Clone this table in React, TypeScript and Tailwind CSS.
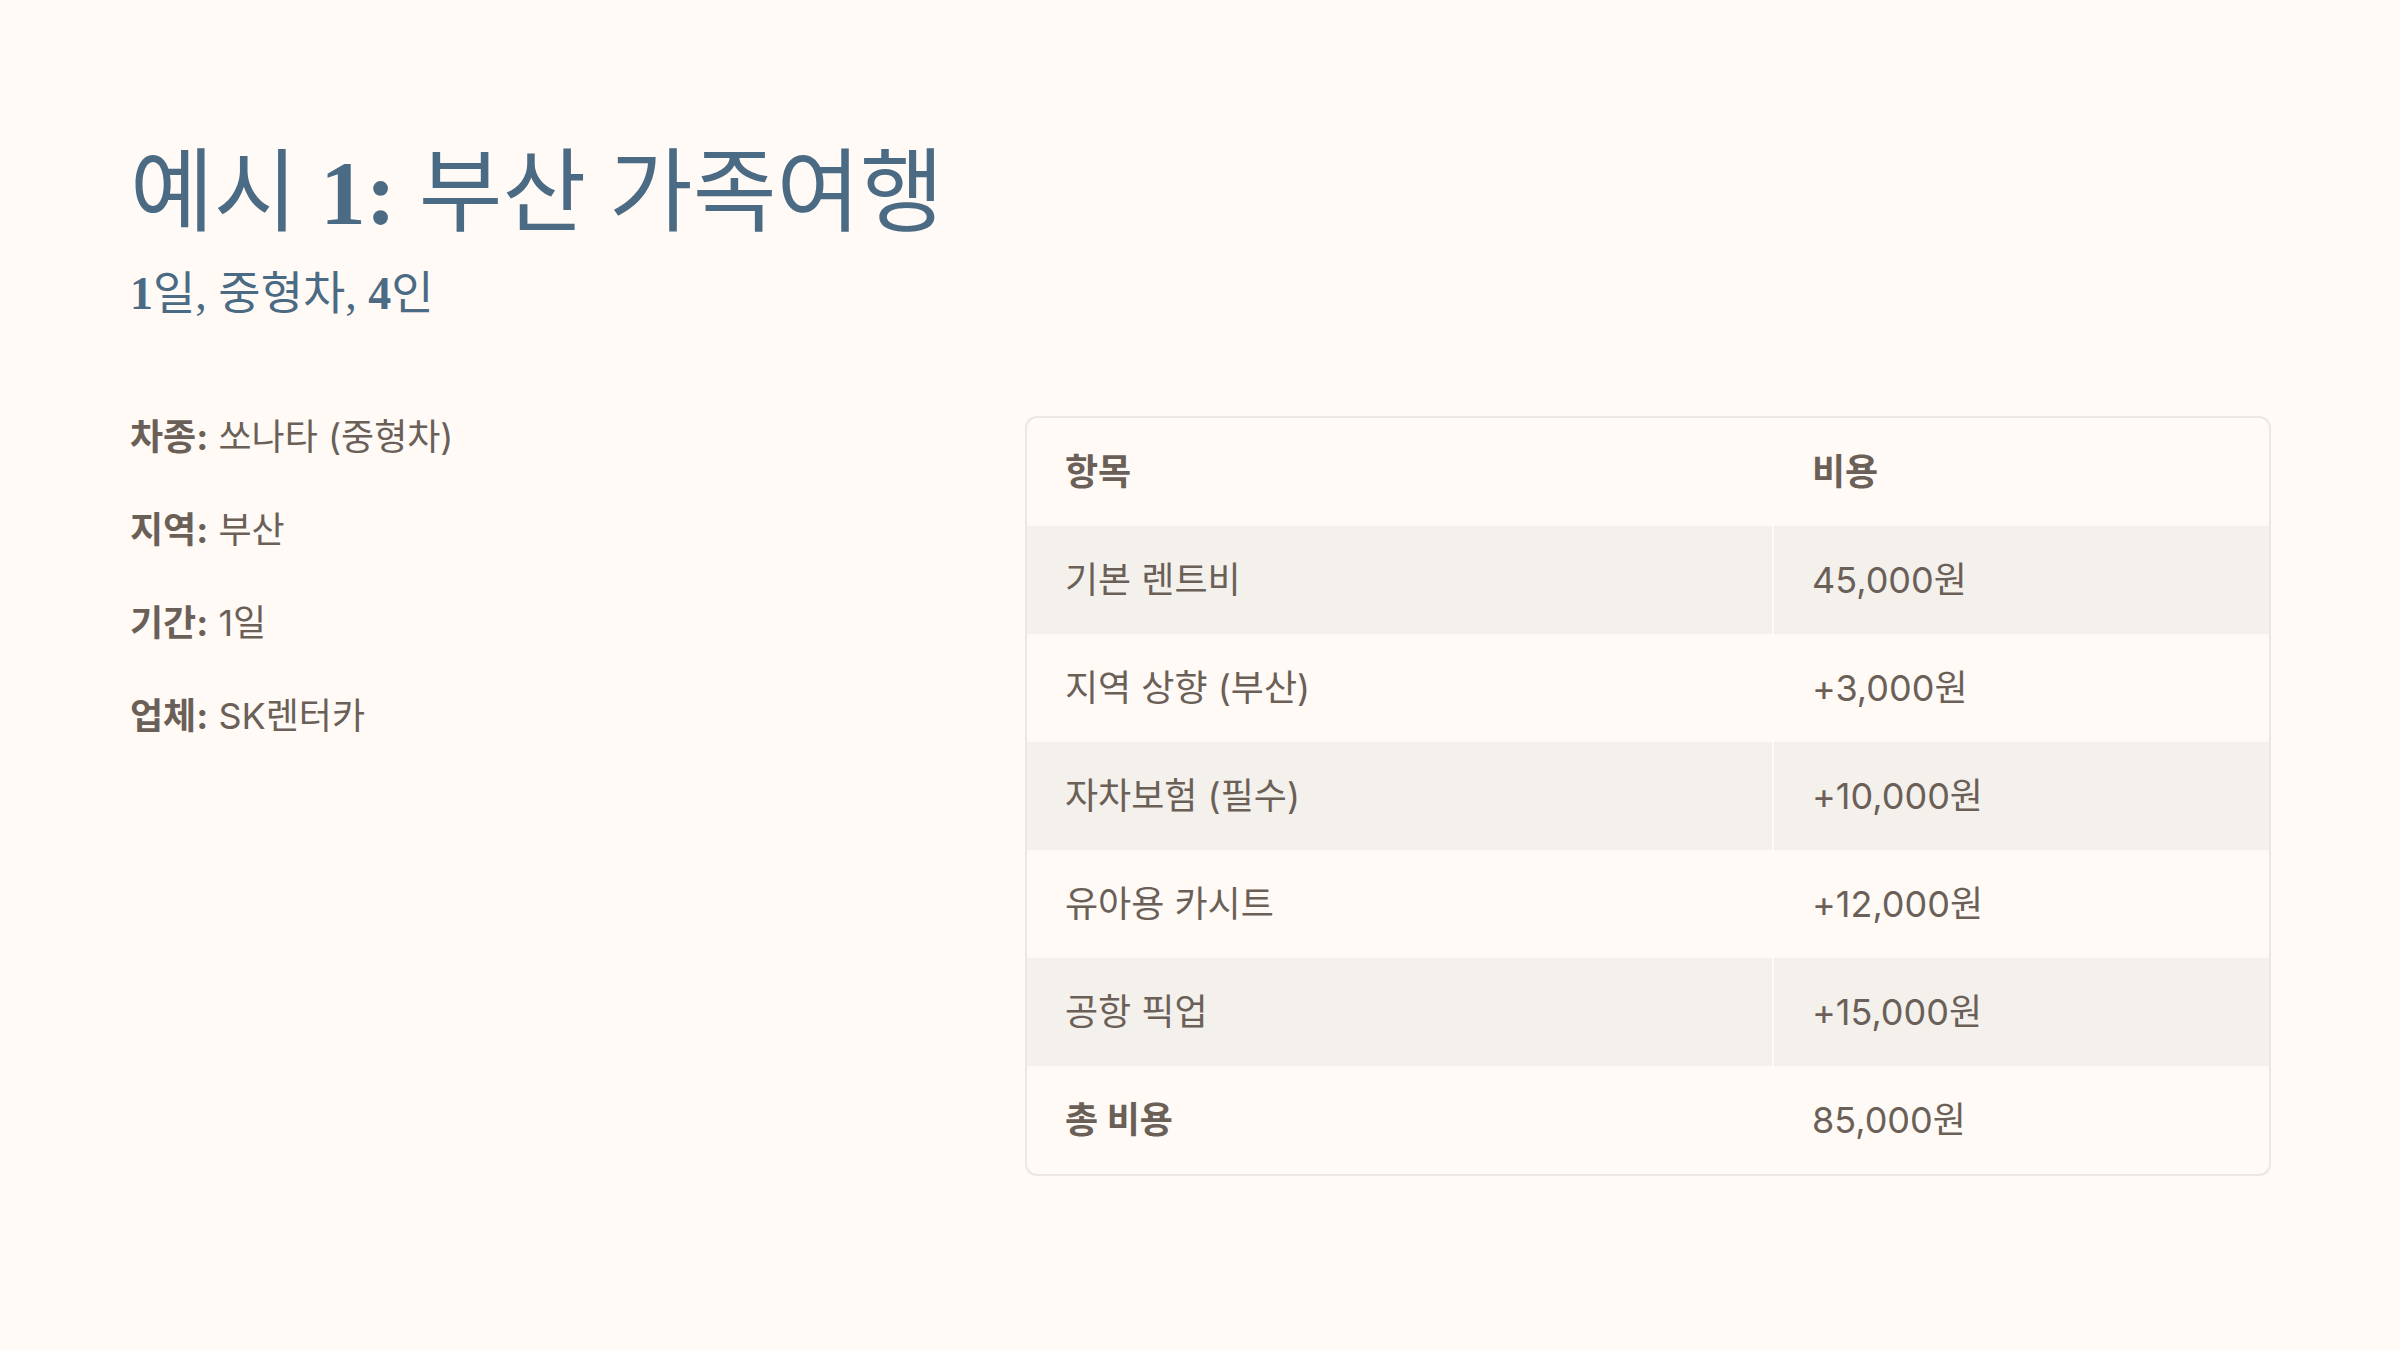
import React from "react";

const SANS = "font-['Inter','Noto_Sans_CJK_KR',sans-serif]";

const rows: { item: string; cost: string; gray: boolean; bold?: boolean }[] = [
  { item: "기본 렌트비", cost: "45,000원", gray: true },
  { item: "지역 상향 (부산)", cost: "+3,000원", gray: false },
  { item: "자차보험 (필수)", cost: "+10,000원", gray: true },
  { item: "유아용 카시트", cost: "+12,000원", gray: false },
  { item: "공항 픽업", cost: "+15,000원", gray: true },
  { item: "총 비용", cost: "85,000원", gray: false, bold: true },
];

const facts: [string, string][] = [
  ["차종:", "쏘나타 (중형차)"],
  ["지역:", "부산"],
  ["기간:", "1일"],
  ["업체:", "SK렌터카"],
];

export default function App() {
  return (
    <div className="w-[2400px] h-[1350px] bg-[#fffaf5] pl-[130px] pr-[129px] pt-[142px] overflow-hidden">
      <h1 className="font-['Liberation_Serif','Noto_Sans_CJK_KR',serif] text-[91px] leading-[1.15] text-[#4b6a84] font-normal">
        예시 <span className="font-bold">1:</span> 부산 가족여행
      </h1>
      <p className="font-['Liberation_Serif','Noto_Sans_CJK_KR',serif] text-[46px] leading-[1.3] text-[#4b6a84] mt-[17px]">
        <span className="font-bold">1</span>일, 중형차, <span className="font-bold">4</span>인
      </p>
      <div className={`grid grid-cols-[minmax(0,1fr)_1246px] gap-[66px] mt-[87px] ${SANS} text-[#6b6058]`}>
        <div className="flex flex-col gap-[39px]">
          {facts.map(([k, v]) => (
            <p key={k} className="text-[36px] leading-[54px]">
              <span className="font-bold">{k}</span> {v}
            </p>
          ))}
        </div>
        <div className="mt-[6px] border-2 border-[#ece7e2] rounded-[12px] overflow-hidden">
          <div className="flex h-[108px] items-center text-[36px] font-bold">
            <div className="w-[747px] pl-[38px]">항목</div>
            <div className="flex-1 pl-[38px]">비용</div>
          </div>
          {rows.map((r) => (
            <div
              key={r.item}
              className={`flex h-[108px] text-[36px] ${r.gray ? "bg-[#f4f0ec]" : ""}`}
            >
              <div
                className={`w-[747px] pl-[38px] flex items-center border-r-2 border-[#fffaf5] ${r.bold ? "font-bold" : ""}`}
              >
                {r.item}
              </div>
              <div className="flex-1 pl-[38px] flex items-center">{r.cost}</div>
            </div>
          ))}
        </div>
      </div>
    </div>
  );
}
